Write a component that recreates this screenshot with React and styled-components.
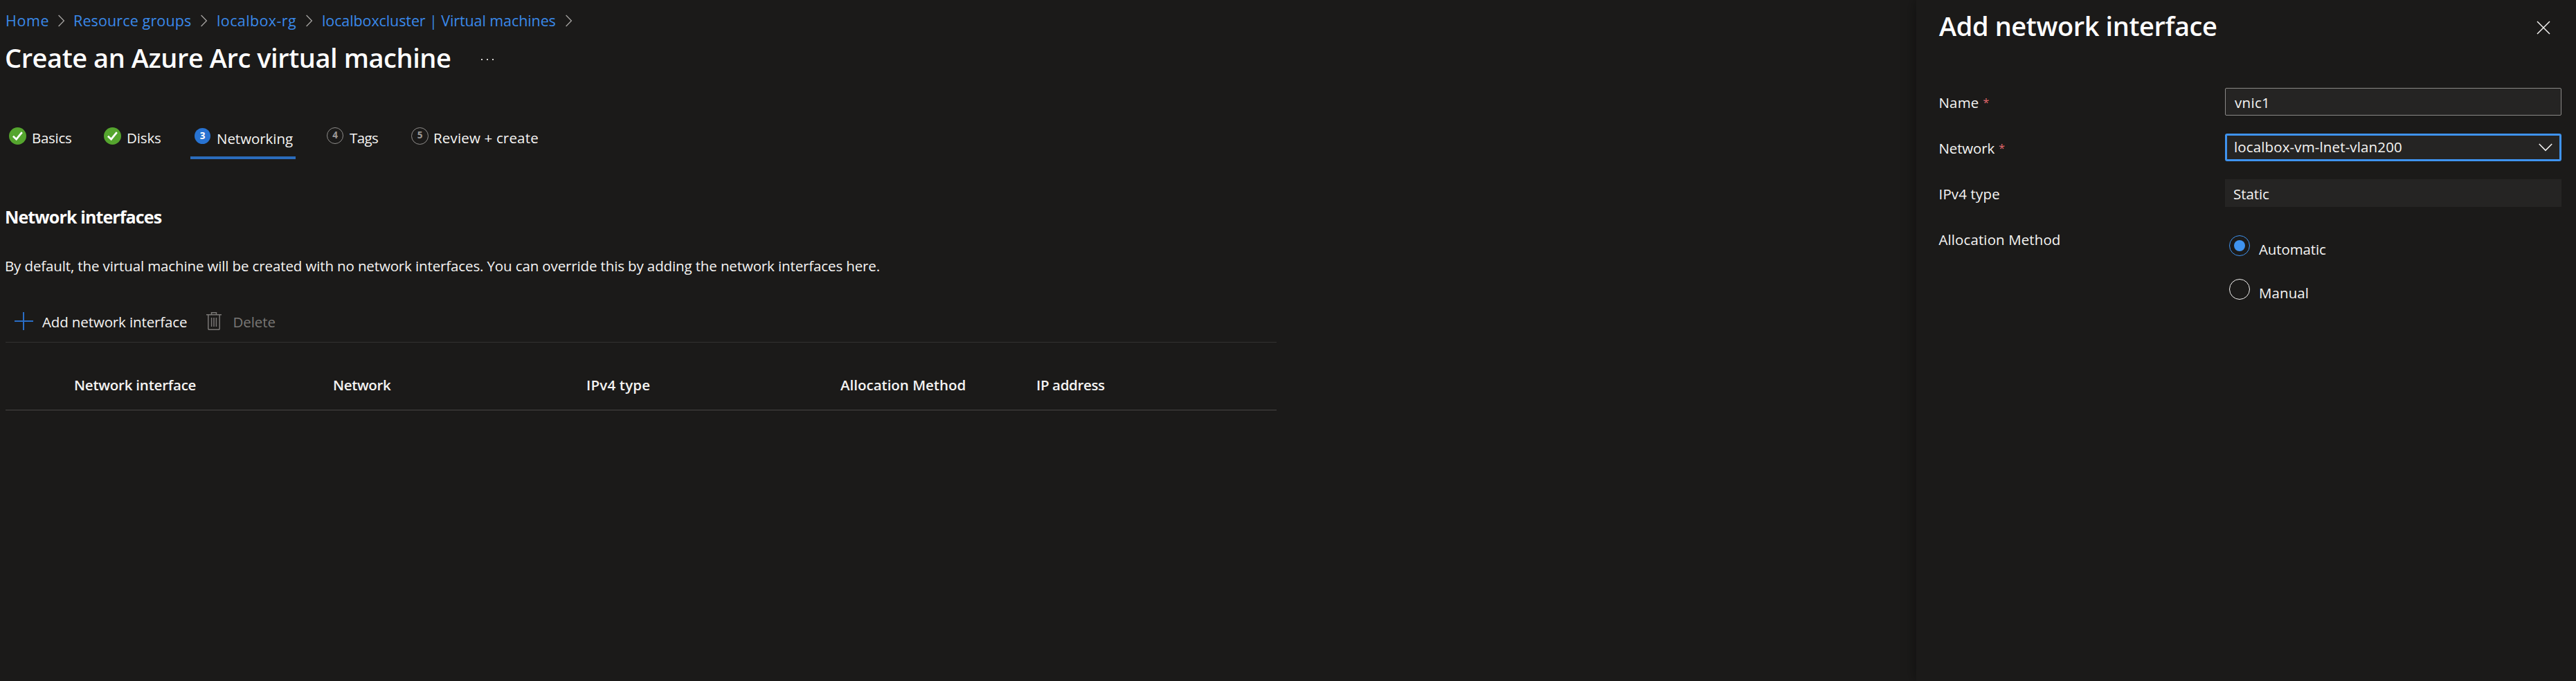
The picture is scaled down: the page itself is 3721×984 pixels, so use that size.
import React from 'react';
import styled, { createGlobalStyle } from 'styled-components';

const GlobalStyle = createGlobalStyle`
  * { box-sizing: border-box; }
  body {
    margin: 0;
    background: #1b1a19;
    color: #f5f4f3;
    font-family: "Open Sans", "Noto Sans", sans-serif;
    font-size: 20.5px;
    line-height: 28px;
    overflow: hidden;
  }
`;

const Page = styled.div`
  display: flex;
  height: 984px;
  width: 100%;
`;

const Main = styled.main`
  flex: 1;
  display: flex;
  flex-direction: column;
  min-width: 0;
`;

const Text = styled.span`
  white-space: nowrap;
  letter-spacing: ${(p) => p.$track || 0}px;
`;

const Breadcrumb = styled.nav`
  display: grid;
  grid-template-columns: 76px 22px 184px 23px 129px 23px 352px 10px;
  padding: 15px 0 0 8px;
  font-size: 21.5px;
  line-height: 29px;
`;

const Crumb = styled(Text)`
  color: #3a89ea;
`;

const CrumbChevron = styled.svg`
  width: 10px;
  height: 18px;
  margin-top: 6px;
  fill: none;
  stroke: #a6a4a2;
  stroke-width: 1.3;
`;

const TitleRow = styled.header`
  display: flex;
  align-items: center;
  margin-top: 13px;
  padding-left: 7px;
`;

const Title = styled.h1`
  margin: 0;
  width: 688px;
  color: #fff;
  font-size: 38px;
  font-weight: 600;
  line-height: 52px;
  letter-spacing: -0.446px;
  white-space: nowrap;
`;

const MoreButton = styled.div`
  display: flex;
  gap: 6px;
  padding-top: 6px;
`;

const Dot = styled.i`
  width: 2px;
  height: 2px;
  background: #d6d4d2;
`;

const Steps = styled.div`
  display: grid;
  grid-template-columns: 137px 125px 197px 122px auto;
  height: 46px;
  margin-top: 75px;
  padding-left: 13px;
`;

const Step = styled.div`
  display: flex;
  align-items: flex-start;
  gap: ${(p) => p.$gap}px;
`;

const ActiveStep = styled(Step)`
  width: 152px;
  padding: 1px 0 0 6px;
  border-bottom: 4px solid #2b6cbc;
`;

const StepLabel = styled(Text)`
  margin-top: 1px;
`;

const CheckIcon = styled.svg`
  width: 25px;
  height: 25px;
`;

const StepNumber = styled.span`
  display: flex;
  justify-content: center;
  width: ${(p) => p.$size}px;
  height: ${(p) => p.$size}px;
  border: ${(p) => (p.$active ? 'none' : '1.4px solid #8f8d8b')};
  border-radius: 50%;
  background: ${(p) => (p.$active ? '#2873d2' : 'transparent')};
  color: ${(p) => (p.$active ? '#fff' : '#9b9997')};
  font-size: 13.5px;
  font-weight: 700;
  line-height: ${(p) => (p.$active ? 22 : 21)}px;
`;

const SectionTitle = styled.h2`
  margin: 66px 0 0 7px;
  color: #fff;
  font-size: 25px;
  font-weight: 700;
  line-height: 34px;
  letter-spacing: -0.88px;
`;

const Description = styled.p`
  margin: 40px 0 0 7px;
  white-space: nowrap;
  letter-spacing: -0.125px;
`;

const GridArea = styled.section`
  width: 1836px;
  margin: 46px 0 0 8px;
`;

const Toolbar = styled.div`
  display: flex;
  align-items: flex-start;
  height: 51px;
  padding: 7px 0 0 13px;
  border-bottom: 1px solid #323130;
`;

const AddIcon = styled.svg`
  width: 27px;
  height: 27px;
  margin-right: 13px;
  stroke: #2a6dc6;
  stroke-width: 2;
`;

const TrashIcon = styled.svg`
  width: 22px;
  height: 27px;
  margin: 0 16px 0 28px;
  fill: none;
  stroke: #797775;
  stroke-width: 1.5;
`;

const DisabledLabel = styled(Text)`
  color: #797775;
`;

const HeaderRow = styled.div`
  display: grid;
  grid-template-columns: 374px 366px 367px 283px auto;
  height: 98px;
  padding: 47px 0 0 99px;
  border-bottom: 1px solid #484644;
  font-weight: 600;
`;

const Panel = styled.aside`
  width: 953px;
  padding: 11px 21px 0 32px;
  background: #1b1a19;
  box-shadow: 0 0 20px rgba(0, 0, 0, 0.42);
`;

const PanelHeader = styled.div`
  display: flex;
  justify-content: space-between;
  height: 116px;
  padding-right: 16px;
`;

const PanelTitle = styled.h2`
  margin: 0 0 0 1px;
  color: #fff;
  font-size: 38px;
  font-weight: 600;
  line-height: 52px;
  letter-spacing: -0.416px;
`;

const CloseIcon = styled.svg`
  width: 20px;
  height: 20px;
  margin-top: 19px;
  stroke: #f3f2f1;
  stroke-width: 1.5;
`;

const Field = styled.div`
  display: grid;
  grid-template-columns: 414px 486px;
  margin-bottom: 26px;
`;

const FieldLabel = styled.div`
  display: flex;
  gap: 6px;
  padding-top: 7px;
  padding-left: 0.5px;
`;

const Required = styled.span`
  color: #e2686d;
  font-size: 16px;
  line-height: 28px;
`;

const Control = styled.div`
  height: 40px;
  background: #252423;
`;

const TextBox = styled(Control)`
  padding: 6px 13px;
  border: 1px solid #8a8886;
  border-radius: 2px;
`;

const Select = styled(Control)`
  display: flex;
  justify-content: space-between;
  padding: 2px 10px;
  border: 3px solid #3f93ef;
  border-radius: 3px;
`;

const ReadOnlyBox = styled(Control)`
  padding: 7px 12px;
`;

const SelectChevron = styled.svg`
  width: 20px;
  height: 12px;
  margin-top: 9px;
  fill: none;
  stroke: #f3f2f1;
  stroke-width: 1.6;
`;

const RadioGroup = styled.div`
  display: flex;
  flex-direction: column;
  padding: 15px 0 0 6px;
`;

const RadioOption = styled.div`
  display: flex;
  height: 63px;
  gap: 13px;
`;

const RadioCircle = styled.span`
  display: flex;
  align-items: center;
  justify-content: center;
  width: 30px;
  height: 30px;
  border: 1.4px solid ${(p) => (p.$checked ? '#3f93ef' : '#f3f2f1')};
  border-radius: 50%;

  &::after {
    content: "";
    width: 16px;
    height: 16px;
    border-radius: 50%;
    background: ${(p) => (p.$checked ? '#3f93ef' : 'transparent')};
  }
`;

const RadioLabel = styled(Text)`
  margin-top: 6px;
`;

const crumbs = [
  { label: 'Home', track: 0.6 },
  { label: 'Resource groups', track: 0.13 },
  { label: 'localbox-rg', track: 0.392 },
  { label: 'localboxcluster | Virtual machines', track: -0.1 },
];

const columns = [
  { label: 'Network interface', track: -0.22 },
  { label: 'Network', track: -0.342 },
  { label: 'IPv4 type', track: 0.2 },
  { label: 'Allocation Method', track: -0.006 },
  { label: 'IP address', track: -0.36 },
];

const Check = () => (
  <CheckIcon viewBox="0 0 25 25">
    <circle cx="12.5" cy="12.5" r="12.5" fill="#55a52e" />
    <path d="M5.9 12.8 10.6 17.2 18.8 7.2" fill="none" stroke="#fff" strokeWidth="2.7" />
  </CheckIcon>
);

export default function App() {
  return (
    <Page>
      <GlobalStyle />
      <Main>
        <Breadcrumb>
          {crumbs.map((c) => (
            <React.Fragment key={c.label}>
              <Crumb $track={c.track}>{c.label}</Crumb>
              <CrumbChevron viewBox="0 0 10 18">
                <path d="M.6 1 8.4 9 .6 17" />
              </CrumbChevron>
            </React.Fragment>
          ))}
        </Breadcrumb>
        <TitleRow>
          <Title>Create an Azure Arc virtual machine</Title>
          <MoreButton>
            <Dot />
            <Dot />
            <Dot />
          </MoreButton>
        </TitleRow>
        <Steps>
          <Step $gap={8}>
            <Check />
            <StepLabel $track={-0.3}>Basics</StepLabel>
          </Step>
          <Step $gap={8}>
            <Check />
            <StepLabel $track={-0.147}>Disks</StepLabel>
          </Step>
          <ActiveStep $gap={9}>
            <StepNumber $active $size={23}>3</StepNumber>
            <StepLabel $track={-0.041}>Networking</StepLabel>
          </ActiveStep>
          <Step $gap={9}>
            <StepNumber $size={24}>4</StepNumber>
            <StepLabel $track={-0.604}>Tags</StepLabel>
          </Step>
          <Step $gap={7}>
            <StepNumber $size={25}>5</StepNumber>
            <StepLabel $track={0.17}>Review + create</StepLabel>
          </Step>
        </Steps>
        <SectionTitle>Network interfaces</SectionTitle>
        <Description>
          By default, the virtual machine will be created with no network interfaces. You can
          override this by adding the network interfaces here.
        </Description>
        <GridArea>
          <Toolbar>
            <AddIcon viewBox="0 0 27 27">
              <path d="M13 0V26M0 13H27" />
            </AddIcon>
            <Text $track={-0.125}>Add network interface</Text>
            <TrashIcon viewBox="0 0 22 27">
              <path d="M0 3.8H22M7.5 3.5V.8H14.5V3.5M2.8 4V23.5Q2.8 25.3 4.5 25.3H17.5Q19.2 25.3 19.2 23.5V4M7.6 8V21M11 8V21M14.4 8V21" />
            </TrashIcon>
            <DisabledLabel $track={-0.076}>Delete</DisabledLabel>
          </Toolbar>
          <HeaderRow>
            {columns.map((c) => (
              <Text key={c.label} $track={c.track}>{c.label}</Text>
            ))}
          </HeaderRow>
        </GridArea>
      </Main>
      <Panel>
        <PanelHeader>
          <PanelTitle>Add network interface</PanelTitle>
          <CloseIcon viewBox="0 0 20 20">
            <path d="M1 1 19 19M19 1 1 19" />
          </CloseIcon>
        </PanelHeader>
        <Field>
          <FieldLabel>
            <Text $track={0.15}>Name</Text>
            <Required>*</Required>
          </FieldLabel>
          <TextBox>
            <Text $track={0.298}>vnic1</Text>
          </TextBox>
        </Field>
        <Field>
          <FieldLabel>
            <Text $track={-0.142}>Network</Text>
            <Required>*</Required>
          </FieldLabel>
          <Select>
            <Text $track={0.135}>localbox-vm-lnet-vlan200</Text>
            <SelectChevron viewBox="0 0 20 12">
              <path d="M.8 1 10 10.4 19.2 1" />
            </SelectChevron>
          </Select>
        </Field>
        <Field>
          <FieldLabel>
            <Text $track={0.15}>IPv4 type</Text>
          </FieldLabel>
          <ReadOnlyBox>
            <Text $track={-0.084}>Static</Text>
          </ReadOnlyBox>
        </Field>
        <Field>
          <FieldLabel>
            <Text $track={0.1}>Allocation Method</Text>
          </FieldLabel>
          <RadioGroup>
            <RadioOption>
              <RadioCircle $checked />
              <RadioLabel $track={-0.128}>Automatic</RadioLabel>
            </RadioOption>
            <RadioOption>
              <RadioCircle />
              <RadioLabel $track={0.1}>Manual</RadioLabel>
            </RadioOption>
          </RadioGroup>
        </Field>
      </Panel>
    </Page>
  );
}
